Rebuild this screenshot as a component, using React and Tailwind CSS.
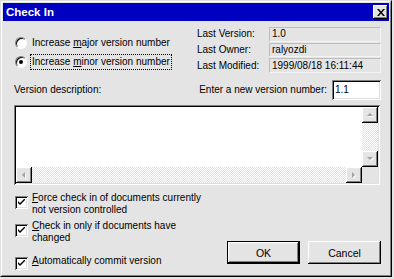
const raised =
  "bg-[#e4e4e4] shadow-[inset_-1px_-1px_0_#000,inset_1px_1px_0_#fff,inset_-2px_-2px_0_#808080,inset_2px_2px_0_#e8e8e8]";
const sunken =
  "shadow-[inset_1px_1px_0_#808080,inset_-1px_-1px_0_#fff,inset_2px_2px_0_#000,inset_-2px_-2px_0_#dfdfdf]";
const track =
  "bg-[repeating-conic-gradient(#ffffff_0_25%,#e2e2e2_0_50%)] bg-[length:2px_2px]";

function Arrow({ dir }) {
  const shapes = {
    up: "M4 1 L7 4 L1 4 Z",
    down: "M1 1 L7 1 L4 4 Z",
    left: "M4 1 L4 7 L1 4 Z",
    right: "M1 1 L4 4 L1 7 Z",
  };
  const box = dir === "up" || dir === "down" ? "0 0 8 6" : "0 0 6 8";
  const w = dir === "up" || dir === "down" ? 8 : 6;
  const h = dir === "up" || dir === "down" ? 6 : 8;
  return (
    <svg width={w} height={h} viewBox={box}>
      <path d={shapes[dir]} fill="#ffffff" transform="translate(1 1)" />
      <path d={shapes[dir]} fill="#a0a0a0" />
    </svg>
  );
}

function ScrollButton({ dir }) {
  return (
    <div className={`flex h-[16px] w-[16px] shrink-0 items-center justify-center ${raised}`}>
      <Arrow dir={dir} />
    </div>
  );
}

function Radio({ checked }) {
  return (
    <div className="relative h-[12px] w-[12px] shrink-0 rounded-full border border-[#808080] border-r-white border-b-white bg-white shadow-[inset_1px_1px_0_#000]">
      {checked ? (
        <div className="absolute left-[3px] top-[3px] h-[4px] w-[4px] rounded-full bg-black" />
      ) : null}
    </div>
  );
}

function CheckBox() {
  return (
    <div className={`mt-[4px] flex h-[13px] w-[13px] shrink-0 items-center justify-center bg-white ${sunken}`}>
      <svg width="7" height="7" viewBox="0 0 7 7">
        <path d="M0 2 L0 4 L2 6 L7 1 L7 -1 L2 4 Z" fill="#000" />
      </svg>
    </div>
  );
}

function InfoRow({ label, value }) {
  return (
    <div className="flex h-[15px] items-center">
      <span className="w-[72px] shrink-0">{label}</span>
      <div className="flex h-full w-[112px] items-center border border-[#bdbdbd] border-r-[#f4f4f4] border-b-[#f4f4f4] pl-[2px]">
        {value}
      </div>
    </div>
  );
}

export default function App() {
  return (
    <div className="h-[279px] w-[394px] bg-[#e4e4e4] font-['Liberation_Sans',Arial,sans-serif] text-[10px] leading-[12px] text-black">
      <div className="h-[277px] w-[392px] border border-[#dfdfdf] border-r-black border-b-black">
        <div className="flex h-full flex-col border border-white border-r-[#808080] border-b-[#808080] p-px">
          <div className="flex h-[18px] shrink-0 items-center justify-between bg-[#0000c0] pl-[3px] pr-[1px]">
            <span className="text-[11.5px] font-bold leading-[14px] text-white">Check In</span>
            <div className={`flex h-[14px] w-[15px] items-center justify-center ${raised}`}>
              <svg width="8" height="7" viewBox="0 0 8 7">
                <path d="M0 0 H2 L4 2.5 L6 0 H8 L5 3.5 L8 7 H6 L4 4.5 L2 7 H0 L3 3.5 Z" fill="#000" />
              </svg>
            </div>
          </div>

          <div className="flex flex-1 flex-col pl-[11px] pr-[8px] pt-[6px]">
            <div className="flex h-[46px]">
              <div className="w-[183px] shrink-0 pl-px pt-[10px]">
                <div className="flex h-[12px] items-center gap-[3px]">
                  <Radio />
                  <span className="border border-transparent px-px">
                    Increase <span className="underline">m</span>ajor version number
                  </span>
                </div>
                <div className="mt-[7px] flex h-[12px] items-center gap-[3px]">
                  <Radio checked />
                  <span className="border border-dotted border-black px-px py-[1px]">
                    Increase <span className="underline">m</span>inor version number
                  </span>
                </div>
              </div>
              <div className="flex flex-col gap-px">
                <InfoRow label="Last Version:" value="1.0" />
                <InfoRow label="Last Owner:" value="ralyozdi" />
                <InfoRow label="Last Modified:" value="1999/08/18 16:11:44" />
              </div>
            </div>

            <div className="mt-[7px] flex h-[20px] items-center justify-between">
              <span>Version description:</span>
              <div className="flex items-center gap-[5px]">
                <span>Enter a new version number:</span>
                <div className={`flex h-[20px] w-[49px] items-center bg-white pl-[3px] ${sunken}`}>
                  1.1
                </div>
              </div>
            </div>

            <div className={`mt-[5px] flex h-[80px] w-[366px] flex-col bg-white p-[2px] ${sunken}`}>
              <div className="flex flex-1">
                <div className="flex-1" />
                <div className={`flex w-[16px] flex-col justify-between ${track}`}>
                  <ScrollButton dir="up" />
                  <ScrollButton dir="down" />
                </div>
              </div>
              <div className="flex h-[16px]">
                <div className={`flex flex-1 justify-between ${track}`}>
                  <ScrollButton dir="left" />
                  <ScrollButton dir="right" />
                </div>
                <div className="w-[16px] bg-[#e4e4e4]" />
              </div>
            </div>

            <div className="flex items-start justify-between">
              <div className="pl-px">
                <div className="mt-[7px] flex gap-[4px]">
                  <CheckBox />
                  <span>
                    <span className="underline">F</span>orce check in of documents currently
                    <br />
                    not version controlled
                  </span>
                </div>
                <div className="mt-[4px] flex gap-[4px]">
                  <CheckBox />
                  <span>
                    <span className="underline">C</span>heck in only if documents have
                    <br />
                    changed
                  </span>
                </div>
                <div className="mt-[9px] flex gap-[4px]">
                  <CheckBox />
                  <span className="pt-[2px]">
                    <span className="underline">A</span>utomatically commit version
                  </span>
                </div>
              </div>
              <div className="mt-[56px] flex gap-[8px]">
                <div className="h-[23px] w-[73px] border border-black">
                  <div className={`flex h-full w-full items-center justify-center text-[10.5px] ${raised}`}>
                    OK
                  </div>
                </div>
                <div className={`flex h-[23px] w-[73px] items-center justify-center text-[10.5px] ${raised}`}>
                  Cancel
                </div>
              </div>
            </div>
          </div>
        </div>
      </div>
    </div>
  );
}
